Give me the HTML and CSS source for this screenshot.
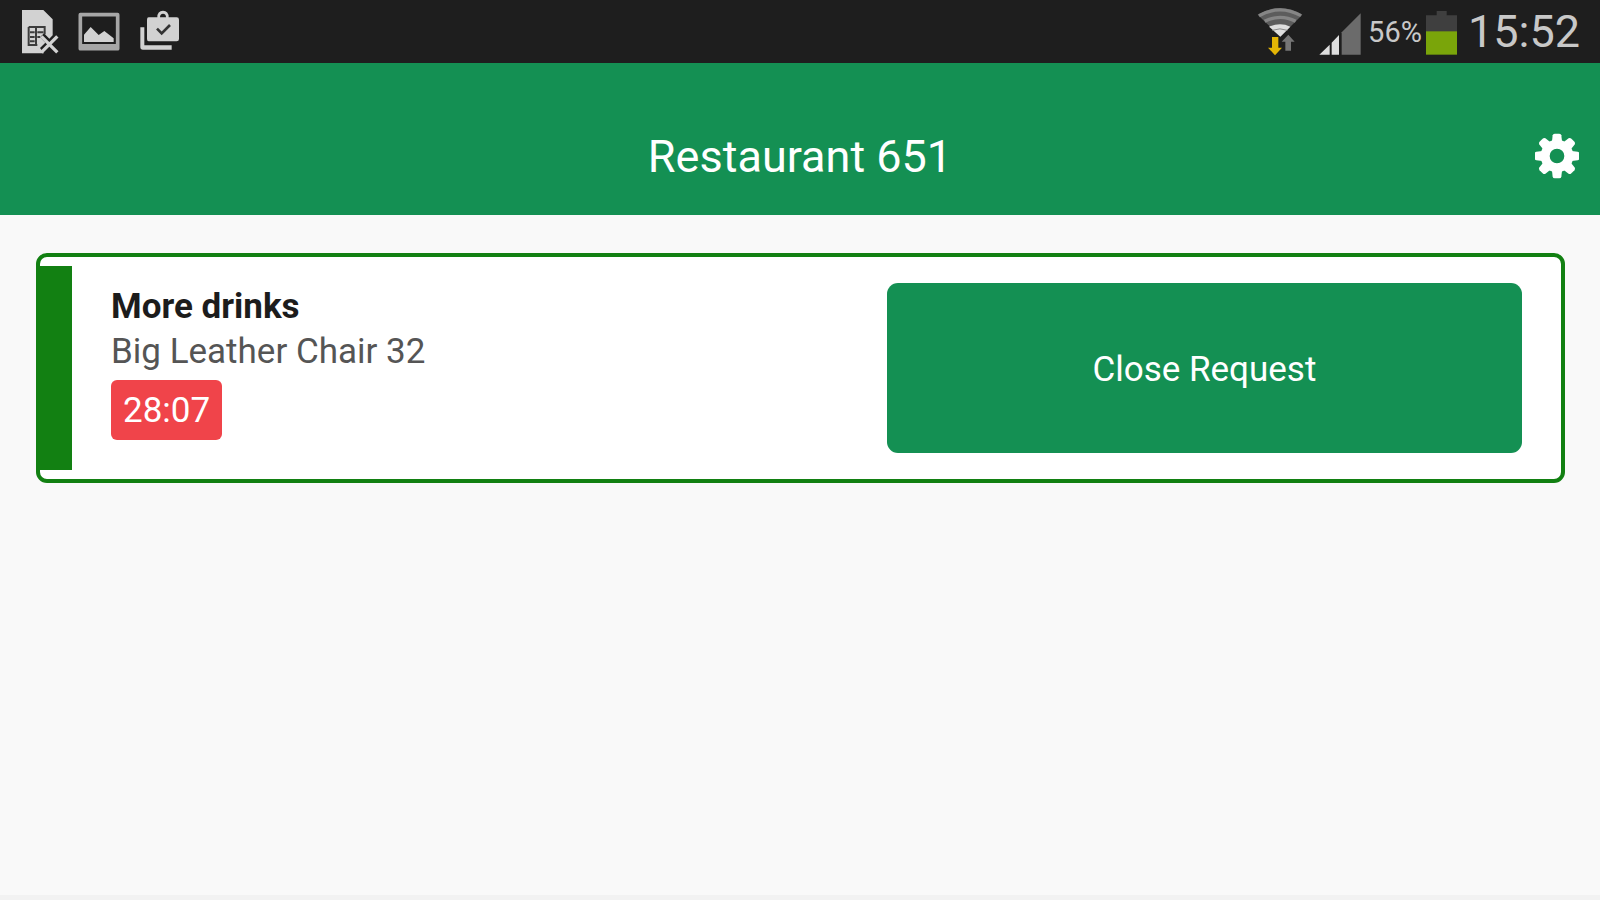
FILE: index.html
```
<!DOCTYPE html>
<html lang="en">
<head>
<meta charset="utf-8">
<meta name="viewport" content="width=device-width, initial-scale=1">
<title>Restaurant 651</title>
<link rel="stylesheet" href="styles.css">
</head>
<body>
<div class="status-bar">
    <div class="notifications">
        <svg width="40" height="63" viewBox="60 0 120 189">
            <path fill="#d2d2d2" d="M66 30h64l28 28v48l-10 10-16-16-12 12 16 16-16 16 12 16H66z"/>
            <path fill="none" stroke="#3c3c3c" stroke-width="6" d="M86 81h48v22M86 81v54h26M90 97h14m8 0h18M90 111h14m8 0h8M90 124h14M108 84v52"/>
            <path stroke="#d2d2d2" stroke-width="10" d="M124 109l48 48M172 109l-48 48"/>
        </svg>
        <svg width="42" height="63" viewBox="234 0 126 189">
            <path fill="none" stroke="#a6a6a6" stroke-width="11" stroke-linejoin="round" d="M241 44h112v102H241z"/>
            <path fill="#a6a6a6" d="M241 132h112v14H241z"/>
            <path fill="#d2d2d2" d="M252 126v-22l20-23 24 24 17-12 28 22v11z"/>
        </svg>
        <svg width="44" height="63" viewBox="414 0 132 189">
            <path fill="#d2d2d2" d="M421 82h12v54h82v13h-86q-8 0-8-8z"/>
            <path fill="#d2d2d2" fill-rule="evenodd" d="M446 52h26q0-20 17-20t17 20h24q7 0 7 7v58q0 7-7 7h-84q-5 0-5-7V59q0-7 5-7zM480 52h18q0-11-9-11t-9 11z"/>
            <path fill="none" stroke="#333" stroke-width="8" d="M471 86l14 14 25-25"/>
        </svg>
    </div>
    <div class="system">
        <svg width="47" height="63" viewBox="48 0 141 189">
            <path fill="#5c5c5c" d="M50 44Q118 4 184 44L118 110z"/>
            <path fill="none" stroke="#858585" stroke-width="10" d="M54 47Q118 12 180 47M71 64q47-24 93 0"/>
            <path fill="#dedede" d="M84 80q34-14 64 0l-30 30z"/>
            <path fill="none" stroke="#8a8a8a" stroke-width="3" d="M94 91q23-9 45 0"/>
            <path fill="#e3b505" d="M93 111h19v32h11l-21 23-21-23h12z"/>
            <path fill="#757575" d="M133 152v-27h-11l20-21 19 21h-11v27z"/>
        </svg>
        <svg class="signal" width="42" height="63" viewBox="234 0 126 189">
            <path fill="#dedede" d="M235 164l31-30v30zM272 164v-36l22-23v59z"/>
            <path fill="#6b6b6b" d="M302 164V97l57-57v124z"/>
        </svg>
        <span class="percent">56%</span>
        <svg class="battery" width="31" height="63" viewBox="78 0 93 189">
            <path fill="#3f3f3f" d="M78 46h32V33h30v13h31v50H78z"/>
            <path fill="#7aa50a" d="M78 94h93v70H78z"/>
        </svg>
        <span class="clock">15:52</span>
    </div>
</div>

<header class="app-header">
    <h1>Restaurant 651</h1>
    <button class="settings" type="button" aria-label="Settings">
        <svg width="44" height="46" viewBox="-66 -69 132 138">
            <g fill="#fff">
                <path fill-rule="evenodd" d="M0-49a49 49 0 1 0 0 98a49 49 0 1 0 0-98zM0-22a22 22 0 1 1 0 44a22 22 0 1 1 0-44z"/>
                <path id="tooth" d="M-15-44l2-18q1-5 6-5H7q5 0 6 5l2 18z"/>
                <use href="#tooth" transform="rotate(45)"/>
                <use href="#tooth" transform="rotate(90)"/>
                <use href="#tooth" transform="rotate(135)"/>
                <use href="#tooth" transform="rotate(180)"/>
                <use href="#tooth" transform="rotate(225)"/>
                <use href="#tooth" transform="rotate(270)"/>
                <use href="#tooth" transform="rotate(315)"/>
            </g>
        </svg>
    </button>
</header>

<main>
    <section class="request">
        <div class="request-info">
            <h2>More drinks</h2>
            <p>Big Leather Chair 32</p>
            <span class="timer">28:07</span>
        </div>
        <button class="close-request" type="button">Close Request</button>
    </section>
</main>
<footer></footer>
</body>
</html>
```

FILE: styles.css
```
* {
    box-sizing: border-box;
}
body {
    display: flex;
    flex-direction: column;
    min-height: 100vh;
    margin: 0;
    background: #f9f9f9;
    font-family: Roboto, sans-serif;
    font-size: 35px;
}
h1, h2, p {
    margin: 0;
}
button {
    border: 0;
    font-family: inherit;
    cursor: pointer;
}
svg {
    display: block;
}

/* device status bar */
.status-bar {
    display: flex;
    justify-content: space-between;
    height: 63px;
    padding: 0 20px;
    background: #1e1e1e;
    color: #c8c8c8;
}
.notifications {
    display: flex;
    gap: 18px;
}
.system {
    display: flex;
    align-items: center;
}
.signal {
    margin-left: 15px;
}
.percent {
    margin-left: 7px;
    font-size: 29px;
    line-height: 66px;
}
.battery {
    margin-left: 4px;
}
.clock {
    margin-left: 11px;
    font-size: 45px;
    line-height: 66px;
}

.app-header {
    display: grid;
    grid-template-columns: 1fr auto 1fr;
    align-items: center;
    height: 152px;
    padding: 34px 21px 0;
    background: #149053;
    color: #fff;
}
.app-header h1 {
    grid-column: 2;
    font-size: 45px;
    font-weight: 400;
}
.settings {
    justify-self: end;
    padding: 0;
    background: none;
}

main {
    flex: 1;
    padding: 38px 35px 38px 36px;
}
.request {
    display: grid;
    grid-template-columns: 4fr 3fr;
    padding: 26px 39px 26px 0;
    border: 4px solid #128012;
    border-radius: 11px;
    background: linear-gradient(#128012, #128012) 0 50% / 32px 204px no-repeat #fff;
}
.request-info {
    padding-left: 71px;
}
.request h2 {
    padding-top: 1px;
    font-size: 35px;
    font-weight: 700;
    line-height: 45px;
    color: #1c1c1c;
}
.request p {
    line-height: 45px;
    color: #555;
}
.timer {
    display: inline-block;
    margin-top: 6px;
    padding: 1px 12px 0;
    border-radius: 6px;
    background: #f0444a;
    color: #fff;
    line-height: 59px;
}
.close-request {
    min-height: 170px;
    padding-top: 4px;
    border-radius: 11px;
    background: #149053;
    color: #fff;
    font-size: 35px;
}

footer {
    height: 5px;
    background: #f2f2f2;
}
```
